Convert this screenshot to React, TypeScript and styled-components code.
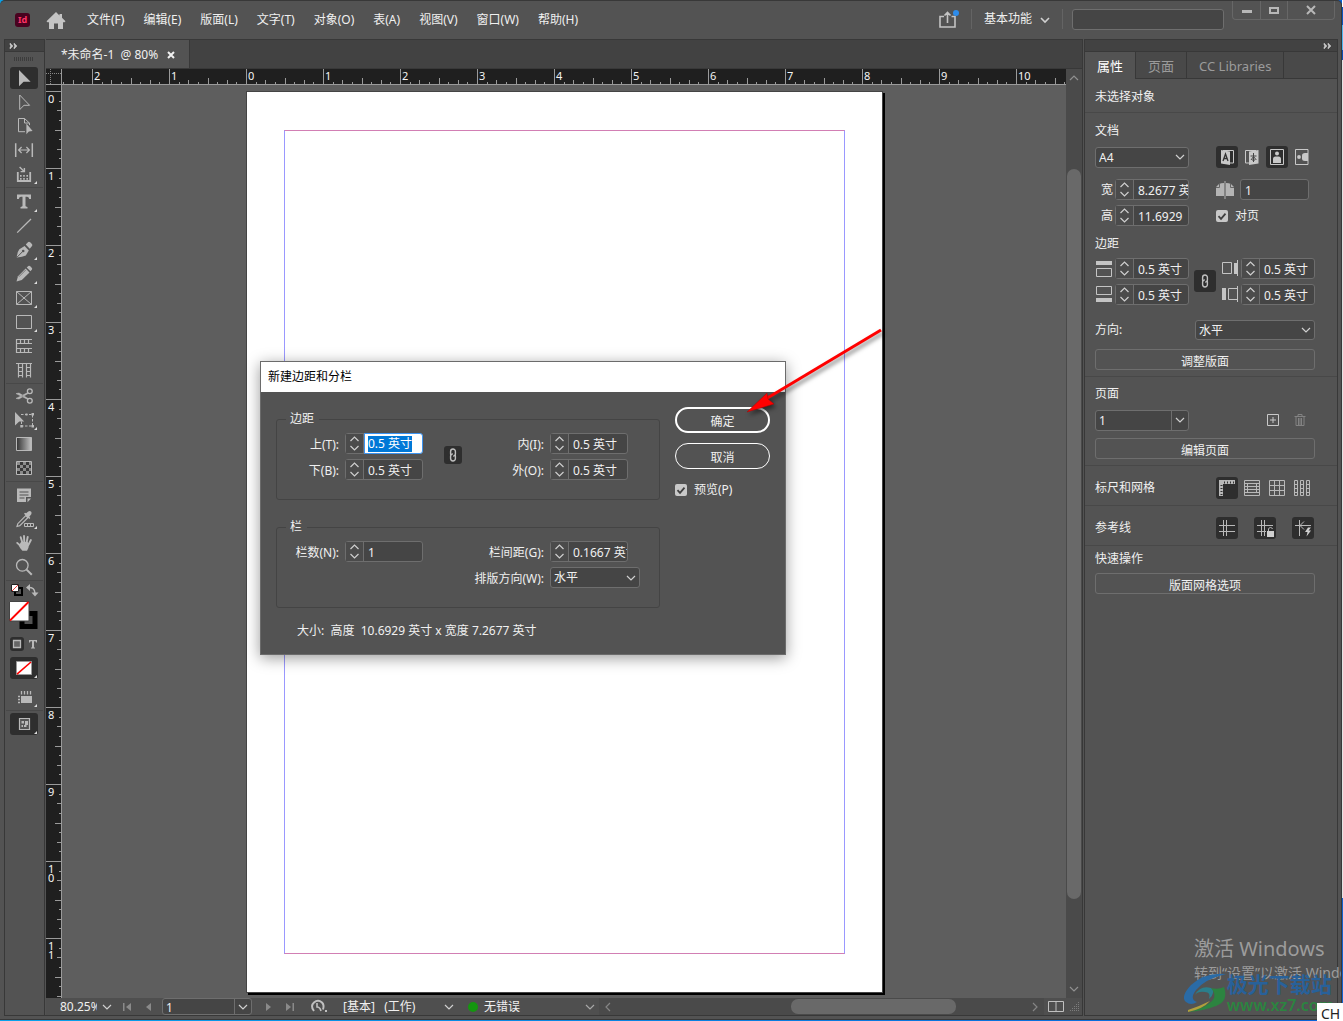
import React, { useEffect, useRef } from "react";
import styled, { createGlobalStyle, css } from "styled-components";

const c = {
  panel: "#535353",
  dark: "#424242",
  edge: "#383838",
  field: "#454545",
  line: "#6e6e6e",
  rule: "#484848",
  pressed: "#2e2e2e",
  icon: "#b9b9b9",
  text: "#f0f0f0",
};

const GlobalStyle = createGlobalStyle`
  * { box-sizing: border-box; }
  body { margin: 0; background: #535353; overflow: hidden; }
  body, button, input, select, fieldset {
    font-family: "Noto Sans", "Noto Sans CJK SC", sans-serif;
    font-size: 12px;
    line-height: 18px;
    color: ${c.text};
  }
  button, input, select { margin: 0; padding: 0; border: 0; background: none; outline: none; }
  svg { display: block; flex: none; overflow: visible; }
`;

/* ---------- window frame ---------- */

const Desktop = styled.div`
  height: 100vh;
  padding: 0 1px 1px 0;
  background:
    linear-gradient(#fff 0 7px, #0b55bf 7px 25px, #52b8f2 25px 50px, #0b4fb5 50px 60px, #e4e4e4 60px 88%, #1262cf 88%) right / 1px 100% no-repeat,
    linear-gradient(90deg, #0aa2ea, #0a62d8);
`;

const Window = styled.div`
  position: relative;
  display: flex;
  flex-direction: column;
  height: 100%;
  background: ${c.panel};
  border: solid ${c.edge};
  border-width: 1px 1px 1px 0;
  border-radius: 5px 5px 0 0;
`;

const TitleBar = styled.header`
  display: flex;
  align-items: flex-start;
  height: 38px;
  flex: none;
  padding: 0 6px 0 15px;
`;

const Brand = styled.div`
  display: flex;
  align-items: center;
  gap: 16px;
  width: 72px;
  height: 38px;
`;

const Logo = styled.span`
  width: 15px;
  height: 14px;
  border-radius: 3px;
  background: #49021f;
  color: #ff3366;
  font-size: 9px;
  font-weight: 700;
  line-height: 14px;
  text-align: center;
`;

const PlainButton = styled.button`
  display: flex;
  align-items: center;
  justify-content: center;
  gap: 8px;
  white-space: nowrap;
`;

const MenuBar = styled.nav`
  display: flex;
  align-items: center;
  gap: 19px;
  height: 38px;
  flex: 1;
`;

const TitleTools = styled.div`
  display: flex;
  align-items: center;
  height: 36px;
  gap: 12px;
`;

const SearchSlot = styled.div`
  display: flex;
  align-items: center;
  height: 37px;
  padding-left: 9px;
`;

const Separator = styled.span`
  width: 1px;
  height: 20px;
  background: #646464;
`;

const Search = styled.input`
  width: 152px;
  height: 21px;
  border: 1px solid ${c.line};
  border-radius: 3px;
  background: ${c.field};
`;

const WindowButtons = styled.div`
  display: flex;
  height: 19px;
  margin-left: 8px;
  border: 1px solid #676767;
  border-top: 0;
  border-radius: 0 0 4px 4px;
`;

const WindowButton = styled(PlainButton)<{ $wide?: boolean }>`
  width: ${(p) => (p.$wide ? 47 : 27)}px;
  & + & { border-left: 1px solid #676767; }
`;

const Body = styled.div`
  display: flex;
  flex: 1;
  min-height: 0;
  padding: 0 3px 3px 4px;
`;

const DockHead = styled.div<{ $right?: boolean }>`
  display: flex;
  align-items: center;
  justify-content: ${(p) => (p.$right ? "flex-end" : "flex-start")};
  height: 13px;
  flex: none;
  padding: 0 5px;
  background: ${c.dark};
  border: solid ${c.edge};
  border-width: 1px 0;
`;

/* ---------- tools ---------- */

const ToolDock = styled.aside`
  display: flex;
  flex-direction: column;
  width: 41px;
  flex: none;
  border: 1px solid ${c.edge};
  border-top: 0;
`;

const Grip = styled.div`
  width: 20px;
  height: 4px;
  flex: none;
  margin: 5px 0 5px 9px;
  background: repeating-linear-gradient(90deg, #3c3c3c 0 1px, transparent 1px 2px);
`;

const Tool = styled.button<{ $on?: boolean; $gap?: number }>`
  display: flex;
  align-items: center;
  justify-content: center;
  width: 28px;
  height: 22px;
  flex: none;
  margin: ${(p) => 1 + (p.$gap ?? 0)}px 5px 1px;
  border-radius: 3px;
  background: ${(p) => (p.$on ? c.pressed : "none")};
`;

const ToolRule = styled.hr`
  width: 37px;
  height: 1px;
  flex: none;
  margin: 1px 1px 0;
  border: 0;
  background: ${c.rule};
`;

const SwatchRow = styled.div<{ $top: number }>`
  display: flex;
  justify-content: space-between;
  align-items: center;
  height: 14px;
  flex: none;
  margin: ${(p) => p.$top}px 5px 0;
`;

const SmallTool = styled(PlainButton)<{ $on?: boolean }>`
  width: 14px;
  height: 14px;
  border-radius: 3px;
  background: ${(p) => (p.$on ? c.pressed : "none")};
`;

/* ---------- document ---------- */

const Document = styled.main`
  display: flex;
  flex-direction: column;
  flex: 1;
  min-width: 0;
  border-right: 1px solid ${c.edge};
  border-bottom: 1px solid ${c.edge};
`;

const TabStrip = styled.div`
  display: flex;
  height: 30px;
  flex: none;
  margin-left: 1px;
  background: ${c.dark};
  border: solid ${c.edge};
  border-width: 1px 0;
`;

const DocTab = styled.div`
  display: flex;
  align-items: center;
  gap: 10px;
  padding: 2px 15px 0;
  background: ${c.panel};
  border-right: 1px solid ${c.edge};
  white-space: pre;
`;

const Workspace = styled.div`
  display: grid;
  grid-template: 16px 1fr / 16px 1fr 16px;
  flex: 1;
  min-height: 0;
  background: #5e5e5e;
  margin-left: 1px;
`;

const RulerCell = styled.div<{ $side?: boolean }>`
  overflow: hidden;
  background: #1f1f1f;
  border: solid #9a9a9a;
  border-width: ${(p) => (p.$side ? "0 1px 0 0" : "0 0 1px 0")};
  svg { width: 100%; height: 100%; overflow: hidden; }
`;

const Corner = styled.div`
  background: #1f1f1f;
  border-right: 1px solid #9a9a9a;
  border-bottom: 1px solid #9a9a9a;
`;

const RulerText = styled.text`
  fill: #f4f4f4;
  font-size: 11px;
`;

const ScrollV = styled.div`
  display: flex;
  flex-direction: column;
  align-items: center;
  justify-content: space-between;
  grid-column: 3;
  grid-row: 1 / 3;
  padding: 4px 1px;
  background: #4a4a4a;
`;

const TrackV = styled.div`
  flex: 1;
  width: 100%;
  padding: 86px 0 85px;
`;

const Thumb = styled.div`
  height: 100%;
  border-radius: 7px;
  background: #696969;
`;

const Canvas = styled.div`
  overflow: hidden;
  padding: 6px 0 0 184px;
`;

const Page = styled.div`
  width: 637px;
  height: 902px;
  padding: 38px 37px;
  background: #fff;
  border: 1px solid #444;
  box-shadow: 2px 2px 0 #000;
`;

const MarginBox = styled.div`
  height: 824px;
  border: 1px solid #9a98ff;
  border-top-color: #d27fb4;
  border-bottom-color: #d27fb4;
`;

const StatusBar = styled.footer`
  display: flex;
  align-items: center;
  height: 17px;
  flex: none;
  margin-left: 1px;
  padding-left: 14px;
  background: #4f4f4f;
`;

const ZoomField = styled.input`
  width: 37px;
  height: 17px;
  margin-right: 5px;
`;

const StatusButton = styled(PlainButton)<{ $w: number }>`
  width: ${(p) => p.$w}px;
  height: 17px;
  flex: none;
`;

const StatusSelect = styled(PlainButton)<{ $w: number }>`
  justify-content: space-between;
  width: ${(p) => p.$w}px;
  white-space: pre;
`;

const StatusLabel = styled.span`
  display: flex;
  align-items: center;
  gap: 6px;
`;

const Dot = styled.i`
  width: 10px;
  height: 10px;
  border-radius: 50%;
  background: #14960f;
`;

const ScrollH = styled.div`
  display: flex;
  align-items: center;
  flex: 1;
  height: 17px;
  margin-left: 4px;
  padding: 0 4px;
  gap: 8px;
  background: #4a4a4a;
`;

const TrackH = styled.div`
  flex: 1;
  height: 15px;
  padding: 0 15% 0 39%;
`;

const StatusEnd = styled.div`
  display: flex;
  align-items: center;
  gap: 6px;
  padding: 0 2px 0 4px;
`;

/* ---------- form controls ---------- */

const fieldFrame = css`
  border: 1px solid ${c.line};
  border-radius: 3px;
  background: ${c.field};
`;

const StepBox = styled.div<{ $w: number }>`
  display: flex;
  width: ${(p) => p.$w}px;
  height: 21px;
  ${fieldFrame}
`;

const Spin = styled.div`
  display: flex;
  flex-direction: column;
  justify-content: space-evenly;
  align-items: center;
  width: 18px;
  flex: none;
  border-right: 1px solid ${c.line};
  background: #4b4b4b;
`;

const StepInput = styled.input<{ $active?: boolean }>`
  flex: 1;
  min-width: 0;
  padding: 2px 0 0 4px;
  ${(p) =>
    p.$active &&
    css`
      margin: -1px -1px -1px 0;
      border: 1px solid #3d94f0;
      border-radius: 0 3px 3px 0;
      background: #fff;
      color: #000;
      padding: 1px 0 0 3px;
      line-height: 16px;
    `}
  &::selection { background: #0078d7; color: #fff; }
`;

const TextField = styled.input<{ $w: number }>`
  width: ${(p) => p.$w}px;
  height: 21px;
  padding: 1px 0 0 4px;
  ${fieldFrame}
`;

const SelectBox = styled.div<{ $w: number; $h?: number; $split?: boolean }>`
  display: grid;
  grid-template: 1fr / 1fr 17px;
  align-items: center;
  width: ${(p) => p.$w}px;
  height: ${(p) => p.$h ?? 21}px;
  flex: none;
  ${fieldFrame}
  select, input {
    grid-area: 1 / 1 / 2 / ${(p) => (p.$split ? 2 : 3)};
    appearance: none;
    min-width: 0;
    height: 100%;
    min-height: 0;
    padding: 1px 0 0 3px;
  }
  svg { grid-area: 1 / 2; justify-self: center; pointer-events: none; }
`;

const DropButton = styled(PlainButton)`
  grid-area: 1 / 2;
  height: 100%;
  border-left: 1px solid ${c.line};
`;

const Check = styled.label`
  display: flex;
  align-items: center;
  gap: 7px;
  height: 21px;
  input {
    appearance: none;
    width: 12px;
    height: 12px;
    border-radius: 2px;
    background: #c8c8c8 url("data:image/svg+xml,%3Csvg xmlns='http://www.w3.org/2000/svg' viewBox='0 0 12 12'%3E%3Cpath d='M2.5 6.2l2.5 2.6L9.5 3.6' fill='none' stroke='%23404040' stroke-width='1.8'/%3E%3C/svg%3E");
  }
`;

const WideButton = styled.button`
  height: 21px;
  padding-top: 3px;
  border: 1px solid ${c.line};
  border-radius: 3px;
`;

const IconButton = styled(PlainButton)<{ $on?: boolean; $small?: boolean }>`
  width: ${(p) => (p.$small ? 18 : 22)}px;
  height: ${(p) => (p.$small ? 18 : 22)}px;
  border-radius: 3px;
  background: ${(p) => (p.$on ? c.pressed : "none")};
`;

/* ---------- properties panel ---------- */

const Properties = styled.aside`
  display: flex;
  flex-direction: column;
  width: 254px;
  flex: none;
  margin-left: 1px;
  border: solid ${c.edge};
  border-width: 0 1px 1px 1px;
`;

const PanelTabs = styled.div`
  display: flex;
  height: 27px;
  flex: none;
  background: #494949;
  border-bottom: 1px solid ${c.edge};
`;

const PanelTab = styled.button<{ $on?: boolean }>`
  padding: 0 12px;
  height: 27px;
  font-size: 13px;
  color: ${(p) => (p.$on ? "#fff" : "#9b9b9b")};
  background: ${(p) => (p.$on ? c.panel : "none")};
  border-right: 1px solid ${c.edge};
`;

const Section = styled.section<{ $top: number; $last?: boolean }>`
  display: flex;
  flex-direction: column;
  padding: ${(p) => p.$top}px 22px 6px 10px;
  border-bottom: ${(p) => (p.$last ? 0 : 1)}px solid ${c.rule};
`;

const Row = styled.div<{ $top?: number; $cols?: string; $h?: number }>`
  display: grid;
  grid-template-columns: ${(p) => p.$cols ?? "121px 1fr"};
  align-items: center;
  height: ${(p) => p.$h ?? 21}px;
  margin-top: ${(p) => p.$top ?? 0}px;
`;

const Group = styled.div<{ $gap?: number; $left?: number }>`
  display: flex;
  align-items: center;
  gap: ${(p) => p.$gap ?? 0}px;
  padding-left: ${(p) => p.$left ?? 0}px;
`;

const Stack = styled.div<{ $top: number }>`
  display: grid;
  margin-top: ${(p) => p.$top}px;
`;

const MarginGrid = styled.div`
  display: grid;
  grid-template-columns: 20px 74px 33px 19px 74px;
  row-gap: 5px;
  align-items: center;
  margin-top: 5px;
`;

const LinkCell = styled.div`
  grid-area: 1 / 3 / 3 / 4;
  display: flex;
  padding: 0 0 2px 5px;
`;

const Caption = styled.label`
  padding-left: 6px;
`;

/* ---------- dialog ---------- */

const Dialog = styled.div`
  position: absolute;
  left: 260px;
  top: 360px;
  width: 526px;
  border: 1px solid #6b6b6b;
  background: ${c.panel};
  box-shadow: 0 3px 14px rgba(0, 0, 0, 0.4);
`;

const DialogTitle = styled.h2`
  margin: 0;
  padding: 6px 7px;
  background: #fff;
  color: #000;
  font-size: 12px;
  font-weight: 400;
  line-height: 18px;
`;

const DialogBody = styled.div`
  display: flex;
  gap: 15px;
  padding: 15px 15px 14px;
`;

const Fields = styled.div`
  display: flex;
  flex-direction: column;
  gap: 18px;
  width: 384px;
  padding-top: 3px;
`;

const FieldSet = styled.fieldset`
  display: flex;
  align-items: flex-start;
  min-width: 0;
  margin: 0;
  padding: 5px 19px 19px 0;
  border: 1px solid #444;
  border-radius: 3px;
`;

const Legend = styled.legend`
  margin-left: 9px;
  padding: 0 5px 0 4px;
`;

const Pairs = styled.div<{ $right?: boolean }>`
  display: grid;
  grid-template-columns: ${(p) => (p.$right ? "max-content 90px" : "62px 78px")};
  gap: 5px 6px;
  margin-left: ${(p) => (p.$right ? "auto" : 0)};
  label { height: 21px; padding-top: 3px; text-align: right; white-space: nowrap; }
`;

const ChainCell = styled.div`
  align-self: center;
  padding: 0 0 4px 21px;
`;

const SizeNote = styled.p`
  margin: -4px 0 0 21px;
  white-space: pre;
`;

const Actions = styled.div`
  display: flex;
  flex-direction: column;
  gap: 10px;
  width: 95px;
`;

const Pill = styled.button<{ $main?: boolean }>`
  height: 26px;
  padding-top: 3px;
  border: ${(p) => (p.$main ? 2 : 1)}px solid #fff;
  border-radius: 13px;
`;

/* ---------- overlays ---------- */

const Arrow = styled.svg`
  position: absolute;
  left: 740px;
  top: 319px;
  filter: drop-shadow(2px 3px 2px rgba(0, 0, 0, 0.5));
`;

const Activation = styled.div`
  position: absolute;
  left: 1194px;
  right: 0;
  bottom: 36px;
  overflow: hidden;
  white-space: nowrap;
  color: #9c9c9c;
  font-size: 14px;
  line-height: 20px;
  strong { display: block; font-size: 20px; font-weight: 400; line-height: 28px; }
`;

const SiteMark = styled.div`
  position: absolute;
  right: 7px;
  bottom: 5px;
  display: flex;
  align-items: center;
  color: #28619a;
  font-size: 21px;
  font-weight: 700;
  line-height: 24px;
  small { display: block; color: #2c8440; font-size: 16px; font-weight: 600; line-height: 18px; }
`;

const Ime = styled.div`
  position: absolute;
  right: -2px;
  bottom: -2px;
  width: 26px;
  height: 18px;
  padding-left: 4px;
  background: #fff;
  color: #222;
  font-size: 14px;
  line-height: 22px;
  overflow: hidden;
`;

/* ---------- icons ---------- */

const Svg = ({ w = 24, h = w, children, fill = false, color = c.icon, sw = 1 }: any) => (
  <svg
    width={w}
    height={h}
    viewBox={`0 0 ${w} ${h}`}
    fill={fill ? color : "none"}
    stroke={fill ? "none" : color}
    strokeWidth={sw}
    aria-hidden="true"
  >
    {children}
  </svg>
);

const Chevron = ({ dir = "down", color = "#d0d0d0" }: { dir?: string; color?: string }) => {
  const d: Record<string, string> = {
    down: "M1 3l4 4 4-4",
    up: "M1 7l4-4 4 4",
    left: "M7 1L3 5l4 4",
    right: "M3 1l4 4-4 4",
  };
  return <Svg w={10} color={color} sw={1.2}><path d={d[dir]} /></Svg>;
};

const DoubleArrow = () => (
  <Svg w={8} h={6} color="#c8c8c8" fill><path d="M0 0l3 3-3 3V4l1-1-1-1zM4 0l3 3-3 3V4l1-1-1-1z" stroke="#c8c8c8" strokeWidth=".5" /></Svg>
);

const Chain = () => (
  <Svg w={8} h={14} color="#c0c0c0" sw={1.4}>
    <path d="M2.2 7.6A2.2 2.2 0 0 1 1.6 6V3.4a2.4 2.4 0 0 1 4.8 0V6a2 2 0 0 1-2.2 2" />
    <path d="M5.8 6.4A2.2 2.2 0 0 1 6.4 8v2.6a2.4 2.4 0 0 1-4.8 0V8a2 2 0 0 1 2.2-2" />
  </Svg>
);

const More = <path d="M25 19v3h-3z" fill="#dcdcdc" stroke="none" />;

const toolIcons: Record<string, React.ReactNode> = {
  select: <path d="M7 4v16.3l4.6-4.5h7z" fill={c.icon} stroke="none" />,
  direct: <path d="M7.7 5v14.6l4.3-4.3h5.6z" />,
  page: <><path d="M13 17.7H6.5V4.5h6l5 4.6v2M12.5 4.5V9h5" /><path d="M14.4 9.6v10.6l2.4-2.6 3.8-.5z" fill={c.icon} stroke="none" /></>,
  gap: <><path d="M3.7 5.3v13.6M20.3 5.3v13.6" strokeWidth="1.5" /><path d="M7 12h10M9.6 9L6.6 12l3 3M14.4 9l3 3-3 3" strokeWidth="1.2" /></>,
  collect: <>
    <path d="M5.8 10v9h12.4v-9" strokeWidth="1.8" />
    <path d="M8 13h1.6v1.8H8zM11.2 13h1.6v1.8h-1.6zM14.4 13H16v1.8h-1.6zM8 16h1.6v1.8H8zM11.2 16h1.6v1.8h-1.6zM14.4 16H16v1.8h-1.6z" fill={c.icon} stroke="none" />
    <path d="M7.6 5l4.6 4.4M12.4 6v3.6H8.6" strokeWidth="1.4" />{More}
  </>,
  type: <><path d="M5 4.500h14v4.500h-1.800q-.4-2.200-2.200-2.200h-1.500V16q0 .8 2 .9V18.500h-7v-1.600q2-.1 2-.9V6.800H9q-1.800 0-2.200 2.200H5z" fill={c.icon} stroke="none" />{More}</>,
  line: <path d="M5.2 18.6L19 5" strokeWidth="1.3" />,
  pen: <>
    <path d="M4.800 19.400Q5 14 7.400 11.200L12.600 8l4.200 4.400-3 5Q10.500 19 4.800 19.400Z" fill={c.icon} stroke="none" />
    <path d="M5 19.200l5.600-5.600" stroke={c.panel} /><circle cx="11.2" cy="13" r="1.3" fill={c.panel} stroke="none" />
    <path d="M13.800 6.600l2.400-2.500q1-.8 2 .2l1.700 1.800q.9 1 .1 2l-2.200 2.600z" fill={c.icon} stroke="none" />{More}
  </>,
  pencil: <><path d="M4.500 19.500L6 14.200l7.700-7.600 3.800 3.800L9.800 18z" fill={c.icon} stroke="none" /><path d="M14.700 5.600l1.700-1.700q.8-.6 1.600.2l1.900 1.900q.6.800 0 1.600l-1.500 1.700z" fill={c.icon} stroke="none" /><path d="M6.900 14.800l7-7" stroke={c.panel} strokeWidth=".6" />{More}</>,
  frame: <><path d="M4.500 5.500h15v13h-15zM4.500 5.500l15 13M19.500 5.500l-15 13" />{More}</>,
  rect: <><path d="M4.500 5.500h15v13h-15z" />{More}</>,
  hgrid: <path d="M20 5.500H4.500v13H20M4.500 9.500H20M4.500 14.500H20M8.500 5.500v4M12.500 5.500v4M16.500 5.500v4M8.500 14.500v4M12.500 14.500v4M16.500 14.500v4" strokeWidth="1.200" />,
  vgrid: <path d="M4 5.500h16M6.500 5.500v14M10.500 5.500v14M14.500 5.500v14M18.500 5.500v14M6.500 9.500h4M6.500 13.500h4M6.500 17.500h4M14.500 9.500h4M14.500 13.500h4M14.500 17.500h4" strokeWidth="1.200" />,
  scissors: <><circle cx="17.800" cy="7.200" r="2.400" strokeWidth="1.300" /><circle cx="17.800" cy="16.800" r="2.400" strokeWidth="1.300" /><path d="M15.800 8.600L4 14.400l3 .600 9-5.400zM15.800 15.400L4 9.600l3-.6 9 5.400z" fill={c.icon} strokeWidth=".5" /></>,
  transform: <>
    <path d="M9 6.500h11.500v11.500H9.500V13" strokeDasharray="2.500 1.500" /><path d="M19.500 5h2.500v2.500h-2.500zM19.500 17h2.500v2.500h-2.500zM8.300 17h2.500v2.500H8.300zM13.500 5.500h2v2h-2z" fill={c.icon} stroke="none" />
    <path d="M3 4v13.500l4.200-4h5z" fill={c.icon} stroke="none" />{More}
  </>,
  gradient: <><defs><linearGradient id="toolGradient"><stop offset="0" stopColor="#333" /><stop offset="1" stopColor="#c4c4c4" /></linearGradient></defs><path d="M4.500 5.500h15v13h-15z" fill="url(#toolGradient)" /></>,
  feather: <><path d="M4.500 5.500h15v13h-15z" fill="#3a3a3a" /><path d="M5 6h3v3H5zM11 6h3v3h-3zM17 6h2v3h-2zM8 9h3v3H8zM14 9h3v3h-3zM5 12h3v3H5zM11 12h3v3h-3zM17 12h2v3h-2zM8 15h3v3H8zM14 15h3v3h-3z" fill="#8c8c8c" stroke="none" /></>,
  note: <><path d="M5 5.500h14v8.500h-5v5H5z" fill={c.icon} stroke="none" /><path d="M15.500 19.200v-3.700H19z" fill={c.icon} stroke="none" /><path d="M7.500 9h9M7.500 12h9M7.500 15h5" stroke={c.panel} strokeWidth="1.200" /></>,
  dropper: <><path d="M5 19.500l.8-2.800 8-8 2 2-8 8z" strokeWidth="1.200" /><path d="M12 6.800l5.300 5.300 1-1-1-1.400 2-2.500q.8-1.400-.3-2.600t-2.700-.2l-2.200 1.900L13 5.800z" fill={c.icon} stroke="none" /><path d="M12.500 16.500h9v3h-9zM15.500 16.500v3M18.500 16.500v3" />{More}</>,
  hand: <>
    <path d="M8.700 6.200l1.900 6M12 4.900l.3 7M15.700 6l-1.200 6M18.900 9l-2.600 5M5.200 11.900l3.800 3.300" strokeWidth="1.900" strokeLinecap="round" />
    <path d="M9 11h6.500l1.700 2q-.4 4-2.200 6.800h-4.600Q8 17.500 6.800 14.400z" fill={c.icon} stroke="none" />
  </>,
  zoom: <><circle cx="10.300" cy="10.300" r="5.800" strokeWidth="1.300" /><path d="M14.600 14.600l5.200 5.200" strokeWidth="2" /></>,
  none: <><path d="M4.500 5.500h15v13h-15z" fill="#fff" stroke="#9a9a9a" /><path d="M5 18.200L19 6" stroke="#f00" strokeWidth="1.600" />{More}</>,
  view: <><path d="M9 11h11v7H9z" fill={c.icon} stroke="none" /><path d="M9.500 6v3.500M12.500 6v3.500M15.500 6v3.500M18.500 6v3.500M6 11.500h2M6 14.500h2M6 17.500h2" strokeWidth="1.300" />{More}</>,
  screen: <><path d="M7.500 6.500h10v11h-10z" fill="#555" strokeWidth="1.200" /><path d="M9.500 9h2.500v2.500H9.500zM13 9h3v4h-1.500v2H12v-2h1zM9.500 13h1.500v2H9.500z" fill={c.icon} stroke="none" />{More}</>,
};

const ToolItem = ({ id, label, on, gap }: { id: string; label: string; on?: boolean; gap?: number }) => (
  <Tool $on={on} $gap={gap} aria-label={label}><Svg>{toolIcons[id]}</Svg></Tool>
);

/* ---------- composite parts ---------- */

const INCH = 77;

function Ruler({ vertical, origin, from, to }: { vertical?: boolean; origin: number; from: number; to: number }) {
  const ticks: React.ReactNode[] = [];
  for (let i = from * 8 - 7; i <= to * 8 + 7; i++) {
    const p = Math.round(origin + (i * INCH) / 8) + 0.5;
    const len = i % 8 === 0 ? 16 : i % 4 === 0 ? 6 : i % 2 === 0 ? 4 : 2;
    ticks.push(vertical ? <path key={i} d={`M${15 - len} ${p}H15`} /> : <path key={i} d={`M${p} ${15 - len}V15`} />);
  }
  const labels: React.ReactNode[] = [];
  for (let n = from; n <= to; n++) {
    const p = Math.round(origin + n * INCH);
    const name = String(Math.abs(n));
    if (!vertical) labels.push(<RulerText key={n} x={p + 2} y={11}>{name}</RulerText>);
    else name.split("").forEach((ch, k) => labels.push(<RulerText key={`${n}-${k}`} x={2} y={p + 12 + k * 9}>{ch}</RulerText>));
  }
  return <svg aria-hidden="true"><g stroke="#9a9a9a">{ticks}</g>{labels}</svg>;
}

function Stepper({ id, label, value, w = 78, active }: { id: string; label?: string; value: string; w?: number; active?: boolean }) {
  const ref = useRef<HTMLInputElement>(null);
  useEffect(() => {
    if (active && ref.current) {
      ref.current.focus();
      ref.current.select();
    }
  }, [active]);
  return (
    <StepBox $w={w}>
      <Spin>
        <PlainButton aria-label="增加" tabIndex={-1}><Svg w={9} h={6} color="#cfcfcf" sw={1.2}><path d="M.5 5l4-4 4 4" /></Svg></PlainButton>
        <PlainButton aria-label="减少" tabIndex={-1}><Svg w={9} h={6} color="#cfcfcf" sw={1.2}><path d="M.5 1l4 4 4-4" /></Svg></PlainButton>
      </Spin>
      <StepInput ref={ref} id={id} aria-label={label} defaultValue={value} $active={active} />
    </StepBox>
  );
}

const Select = ({ id, label, value, w, h }: { id?: string; label?: string; value: string; w: number; h?: number }) => (
  <SelectBox $w={w} $h={h}>
    <select id={id} aria-label={label}><option>{value}</option></select>
    <Chevron />
  </SelectBox>
);

const Combo = ({ w, h, label }: { w: number; h?: number; label: string }) => (
  <SelectBox $w={w} $h={h} $split>
    <input defaultValue="1" aria-label={label} />
    <DropButton aria-label="展开"><Chevron /></DropButton>
  </SelectBox>
);

const MarginIcon = ({ side }: { side: "top" | "bottom" | "inner" | "outer" }) => (
  <Svg w={17} h={17} color="#c4c4c4">
    {side === "top" && <><path d="M1 1h16v4H1z" fill="#c4c4c4" stroke="none" /><path d="M1.500 8.500h15v8h-15z" /></>}
    {side === "bottom" && <><path d="M1 12h16v4H1z" fill="#c4c4c4" stroke="none" /><path d="M1.500 .5h15v8h-15z" /></>}
    {side === "inner" && <><path d="M12 3h4v11h-4z" fill="#c4c4c4" stroke="none" /><path d="M.5 2.500h9v11h-9zM15.500 0v16" /></>}
    {side === "outer" && <><path d="M0 2h4v12H0z" fill="#c4c4c4" stroke="none" /><path d="M15 2.500H6.500v11H15M15.500 0v16" /></>}
  </Svg>
);

const menus = ["文件(F)", "编辑(E)", "版面(L)", "文字(T)", "对象(O)", "表(A)", "视图(V)", "窗口(W)", "帮助(H)"];

function MarginsDialog() {
  return (
    <Dialog role="dialog" aria-labelledby="dlg-title">
      <DialogTitle id="dlg-title">新建边距和分栏</DialogTitle>
      <DialogBody>
        <Fields>
          <FieldSet>
            <Legend>边距</Legend>
            <Pairs>
              <label htmlFor="m-top">上(T):</label>
              <Stepper id="m-top" value="0.5 英寸" active />
              <label htmlFor="m-bottom">下(B):</label>
              <Stepper id="m-bottom" value="0.5 英寸" />
            </Pairs>
            <ChainCell><IconButton $on $small aria-label="统一边距"><Chain /></IconButton></ChainCell>
            <Pairs $right>
              <label htmlFor="m-in">内(I):</label>
              <Stepper id="m-in" value="0.5 英寸" />
              <label htmlFor="m-out">外(O):</label>
              <Stepper id="m-out" value="0.5 英寸" />
            </Pairs>
          </FieldSet>
          <FieldSet>
            <Legend>栏</Legend>
            <Pairs>
              <label htmlFor="col-n">栏数(N):</label>
              <Stepper id="col-n" value="1" />
            </Pairs>
            <Pairs $right>
              <label htmlFor="col-g">栏间距(G):</label>
              <Stepper id="col-g" value="0.1667 英寸" />
              <label htmlFor="col-w">排版方向(W):</label>
              <Select id="col-w" value="水平" w={90} />
            </Pairs>
          </FieldSet>
          <SizeNote>大小:  高度  10.6929 英寸 x 宽度 7.2677 英寸</SizeNote>
        </Fields>
        <Actions>
          <Pill $main>确定</Pill>
          <Pill>取消</Pill>
          <Check><input type="checkbox" defaultChecked />预览(P)</Check>
        </Actions>
      </DialogBody>
    </Dialog>
  );
}

function PropertiesPanel() {
  return (
    <Properties>
      <DockHead $right><DoubleArrow /></DockHead>
      <PanelTabs>
        <PanelTab $on>属性</PanelTab><PanelTab>页面</PanelTab><PanelTab>CC Libraries</PanelTab>
      </PanelTabs>
      <Section $top={9}>未选择对象</Section>
      <Section $top={9}>
        <span>文档</span>
        <Row $top={6} $h={22}>
          <Select label="页面大小" value="A4" w={94} />
          <Group $gap={3}>
            <IconButton $on aria-label="从左到右"><Svg w={14} h={16} color="#c8c8c8"><path d="M3 1.500h10.500V14H3" /><path d="M1 1l9 1.500V16l-9-1.500z" fill="#c8c8c8" stroke="none" /><path d="M3 12l2.500-7L8 12M4 9.500h3.200" stroke="#333" strokeWidth="1.300" /></Svg></IconButton>
            <IconButton aria-label="从右到左"><Svg w={14} h={16} color="#c8c8c8"><path d="M11 1.500H.5V14H4" /><path d="M13.500 1L4 2.500V16l9.500-1.500z" fill="#c8c8c8" stroke="none" /><path d="M5.500 7h6M8.500 4v9M8.500 7.500L6 11M8.500 7.500l2.800 3.500M7 11h3" stroke="#444" /></Svg></IconButton>
            <IconButton $on aria-label="纵向"><Svg w={14} h={16} color="#c8c8c8"><path d="M.5 .5h13v15H.5z" /><circle cx="7" cy="4.500" r="2" fill="#c8c8c8" stroke="none" /><path d="M3 14v-4q0-2.500 2.500-2.500h3Q11 7.500 11 10v4z" fill="#c8c8c8" stroke="none" /></Svg></IconButton>
            <IconButton aria-label="横向"><Svg w={14} h={16} color="#c8c8c8"><path d="M.5 .5h12.500v15H.5z" /><circle cx="4" cy="8" r="1.900" fill="#c8c8c8" stroke="none" /><path d="M13 4h-3q-3 0-3 2.500v3Q7 12 10 12h3z" fill="#c8c8c8" stroke="none" /></Svg></IconButton>
          </Group>
        </Row>
        <Row $top={11} $cols="20px 101px 24px 1fr">
          <Caption htmlFor="p-w">宽</Caption>
          <Stepper id="p-w" value="8.2677 英寸" w={74} />
          <Svg w={18} h={18} fill color="#b4b4b4"><path d="M0 6l3-3q2-1 5-1v13H0zM10 2q3 0 5 1l3 3v9h-8zM8.500 0h1v18h-1z" /><path d="M0 6.500h3.500V3M18 6.500h-3.500V3" stroke="#666" fill="none" /></Svg>
          <TextField $w={69} defaultValue="1" aria-label="页数" />
        </Row>
        <Row $top={5} $cols="20px 101px 1fr">
          <Caption htmlFor="p-h">高</Caption>
          <Stepper id="p-h" value="11.6929" w={74} />
          <Check><input type="checkbox" defaultChecked />对页</Check>
        </Row>
        <Stack $top={9}>边距</Stack>
        <MarginGrid>
          <MarginIcon side="top" /><Stepper id="p-mt" label="上边距" value="0.5 英寸" w={74} />
          <LinkCell><IconButton $on aria-label="统一边距"><Chain /></IconButton></LinkCell>
          <MarginIcon side="inner" /><Stepper id="p-mi" label="内边距" value="0.5 英寸" w={74} />
          <MarginIcon side="bottom" /><Stepper id="p-mb" label="下边距" value="0.5 英寸" w={74} />
          <MarginIcon side="outer" /><Stepper id="p-mo" label="外边距" value="0.5 英寸" w={74} />
        </MarginGrid>
        <Row $top={15} $cols="100px 1fr" $h={20}>
          <label htmlFor="p-dir">方向:</label>
          <Select id="p-dir" value="水平" w={120} h={20} />
        </Row>
        <Stack $top={9}><WideButton>调整版面</WideButton></Stack>
      </Section>
      <Section $top={8}>
        <span>页面</span>
        <Row $top={6} $cols="167px 1fr">
          <Combo w={94} label="当前页面" />
          <Group $gap={5}>
            <IconButton aria-label="新建页面"><Svg w={12} color="#c8c8c8"><path d="M.5 .5h11v11H.5zM3 6h6M6 3v6" /></Svg></IconButton>
            <IconButton aria-label="删除页面"><Svg w={12} color="#838383"><path d="M.5 2.500h11M4 2V.5h4V2M2 3v8.500h8V3M4.500 4v7M6 4v7M7.500 4v7" /></Svg></IconButton>
          </Group>
        </Row>
        <Stack $top={8}><WideButton>编辑页面</WideButton></Stack>
      </Section>
      <Section $top={10}>
        <Row $h={23}>
          <span>标尺和网格</span>
          <Group $gap={3}>
            <IconButton $on aria-label="标尺"><Svg w={16}><path d="M0 0h16v4H4v12H0z" fill={c.icon} stroke="none" /><path d="M5 2.500h11M2.500 5v11" stroke="#333" strokeDasharray="1 2" strokeWidth="2" /></Svg></IconButton>
            <IconButton aria-label="基线网格"><Svg w={16}><path d="M.5 .5h15v15H.5zM.5 3.500h15M.5 6.500h15M.5 9.500h15M.5 12.500h15M3.500 3v10M12.500 3v10" /></Svg></IconButton>
            <IconButton aria-label="文档网格"><Svg w={16}><path d="M.5 .5h15v15H.5zM.5 5.500h15M.5 10.500h15M5.500 .5v15M10.500 .5v15" /></Svg></IconButton>
            <IconButton aria-label="版面网格"><Svg w={16}><path d="M.5 .5h3v15h-3zM6.500 .5h3v15h-3zM12.500 .5h3v15h-3zM.5 4.500h3M.5 8.500h3M.5 12.500h3M6.500 4.500h3M6.500 8.500h3M6.500 12.500h3M12.500 4.500h3M12.500 8.500h3M12.500 12.500h3" /></Svg></IconButton>
          </Group>
        </Row>
      </Section>
      <Section $top={10}>
        <Row $h={23}>
          <span>参考线</span>
          <Group $gap={16}>
            <IconButton $on aria-label="显示参考线"><Svg w={16}><path d="M0 5.500h16M0 11.500h16M4.500 0v16M7.500 0v16" /></Svg></IconButton>
            <IconButton $on aria-label="锁定参考线"><Svg w={16}><path d="M0 5.500h16M0 11.500h9M4.500 0v16M7.500 0v16" /><path d="M10 11h7v6h-7z" fill="#d0d0d0" stroke="none" /><path d="M11.500 11V9q.5-1.500 2-1.500t2 1.500" /></Svg></IconButton>
            <IconButton $on aria-label="智能参考线"><Svg w={16}><path d="M0 5.500h16M4.500 0v16M9 1.500l-4 4 4 4" /><path d="M13 7.500L10 12h2.500l-1 4.500 4.500-6h-2.500L16 7.500z" fill="#d0d0d0" stroke="none" /></Svg></IconButton>
          </Group>
        </Row>
      </Section>
      <Section $top={4} $last>
        <span>快速操作</span>
        <Stack $top={5}><WideButton>版面网格选项</WideButton></Stack>
      </Section>
    </Properties>
  );
}

export default function App() {
  return (
    <>
      <GlobalStyle />
      <Desktop>
        <Window>
          <TitleBar>
            <Brand>
              <Logo>Id</Logo>
              <PlainButton aria-label="主页"><Svg w={20} h={17} fill color="#c4c4c4"><path d="M10 0l3.500 3.400V2H16v3.800l3.500 3.400-1 1H17V17h-5v-5.500H8V17H3v-6.800H1.500l-1-1z" /></Svg></PlainButton>
            </Brand>
            <MenuBar>{menus.map((m) => <PlainButton key={m}>{m}</PlainButton>)}</MenuBar>
            <TitleTools>
              <PlainButton aria-label="共享"><Svg w={20} h={18} color="#c4c4c4" sw={1.6}><path d="M5 6.500H1v10.500h15V6.500h-3.500M8.500 13V3M5.500 5.500l3-3 3 3" /><circle cx="17" cy="3" r="3" fill="#2d8ceb" stroke="none" /></Svg></PlainButton>
              <Separator />
              <PlainButton>基本功能<Svg w={10} color="#d0d0d0" sw={1.6}><path d="M1 4l4 4 4-4" /></Svg></PlainButton>
              <Separator />
            </TitleTools>
            <SearchSlot><Search aria-label="搜索" /></SearchSlot>
            <WindowButtons>
              <WindowButton aria-label="最小化"><Svg w={10} h={3} fill color="#b8b8b8"><path d="M0 1h10v3H0z" /></Svg></WindowButton>
              <WindowButton aria-label="最大化"><Svg w={10} h={7} color="#b8b8b8" sw={2}><path d="M1 1h8v5H1z" /></Svg></WindowButton>
              <WindowButton $wide aria-label="关闭"><Svg w={10} h={8} color="#b8b8b8" sw={2}><path d="M1 0l8 8M9 0L1 8" /></Svg></WindowButton>
            </WindowButtons>
          </TitleBar>

          <Body>
            <ToolDock>
              <DockHead><DoubleArrow /></DockHead>
              <Grip />
              <ToolItem id="select" label="选择工具" on />
              <ToolItem id="direct" label="直接选择工具" />
              <ToolItem id="page" label="页面工具" />
              <ToolItem id="gap" label="间隙工具" />
              <ToolItem id="collect" label="内容收集器工具" />
              <ToolRule />
              <ToolItem id="type" label="文字工具" gap={2} />
              <ToolItem id="line" label="直线工具" />
              <ToolItem id="pen" label="钢笔工具" />
              <ToolItem id="pencil" label="铅笔工具" />
              <ToolItem id="frame" label="矩形框架工具" />
              <ToolItem id="rect" label="矩形工具" />
              <ToolItem id="hgrid" label="水平网格工具" />
              <ToolItem id="vgrid" label="垂直网格工具" />
              <ToolRule />
              <ToolItem id="scissors" label="剪刀工具" />
              <ToolItem id="transform" label="自由变换工具" />
              <ToolItem id="gradient" label="渐变色板工具" />
              <ToolItem id="feather" label="渐变羽化工具" />
              <ToolRule />
              <ToolItem id="note" label="附注工具" gap={1} />
              <ToolItem id="dropper" label="颜色主题工具" />
              <ToolItem id="hand" label="抓手工具" />
              <ToolItem id="zoom" label="缩放显示工具" />
              <ToolRule />
              <SwatchRow $top={2}>
                <SmallTool aria-label="默认填色和描边"><Svg w={12}><path d="M4 4h7v7H4z" stroke="#000" strokeWidth="2" /><path d="M.5 .5h7v7h-7z" fill="#fff" stroke="#222" /><path d="M1 7l6-6" stroke="#e44" /></Svg></SmallTool>
                <SmallTool aria-label="互换填色和描边"><Svg w={12}><path d="M2 3.500q7-.5 7 6" strokeWidth="1.600" /><path d="M4 0v7L0 3.500zM5.500 8.500h7L9 12.500z" fill={c.icon} stroke="none" /></Svg></SmallTool>
              </SwatchRow>
              <SwatchRow $top={10}>
                <Svg w={28} h={14}>
                  <path d="M12 6.500h13v13H12z" stroke="#000" strokeWidth="5" />
                  <path d="M-.5 -5.500h19.500v19.500H-.5z" fill="#fff" stroke="#444" />
                  <path d="M0 13.500L18.500 -5" stroke="#f00" strokeWidth="1.800" />
                </Svg>
              </SwatchRow>
              <SwatchRow $top={16}>
                <SmallTool $on aria-label="格式针对容器"><Svg w={8}><path d="M.5 .5h7v7h-7z" fill="#666" strokeWidth="1.300" /></Svg></SmallTool>
                <SmallTool aria-label="格式针对文本"><Svg w={10} h={10}><path d="M2 1h8v2.500H9L8.500 2.300H7V8.500h1V9.500H4V8.500h1V2.300H3.500L3 3.500H2z" fill={c.icon} stroke="none" /></Svg></SmallTool>
              </SwatchRow>
              <ToolItem id="none" label="应用无" on gap={5} />
              <ToolItem id="view" label="视图选项" gap={5} />
              <ToolRule />
              <ToolItem id="screen" label="屏幕模式" on gap={1} />
            </ToolDock>

            <Document>
              <TabStrip>
                <DocTab>*未命名-1  @ 80%
                  <PlainButton aria-label="关闭文档"><Svg w={6} color="#f0f0f0" sw={2}><path d="M0 0l6 6M6 0L0 6" /></Svg></PlainButton>
                </DocTab>
              </TabStrip>
              <Workspace>
                <Corner><Svg w={15} color="#888"><path d="M0 4.500h15M4.500 0v15" strokeDasharray="1 1" /></Svg></Corner>
                <RulerCell><Ruler origin={184} from={-2} to={10} /></RulerCell>
                <ScrollV>
                  <Chevron dir="up" color="#909090" />
                  <TrackV><Thumb /></TrackV>
                  <Chevron color="#909090" />
                </ScrollV>
                <RulerCell $side><Ruler vertical origin={6} from={0} to={11} /></RulerCell>
                <Canvas><Page><MarginBox /></Page></Canvas>
              </Workspace>
              <StatusBar>
                <ZoomField defaultValue="80.25%" aria-label="缩放级别" />
                <StatusButton $w={10} aria-label="缩放选项"><Chevron /></StatusButton>
                <StatusButton $w={30} aria-label="第一页"><Svg w={8} fill color="#8a8a8a"><path d="M0 0h1.500v8H0zM8 0v8L3 4z" /></Svg></StatusButton>
                <StatusButton $w={14} aria-label="上一页"><Svg w={8} fill color="#8a8a8a"><path d="M6 0v8L1 4z" /></Svg></StatusButton>
                <Group $left={6}><Combo w={90} h={17} label="页码" /></Group>
                <StatusButton $w={32} aria-label="下一页"><Svg w={8} fill color="#8a8a8a"><path d="M2 0v8l5-4z" /></Svg></StatusButton>
                <StatusButton $w={12} aria-label="最后一页"><Svg w={8} fill color="#8a8a8a"><path d="M6.500 0H8v8H6.500zM0 0v8l5-4z" /></Svg></StatusButton>
                <StatusButton $w={47} aria-label="打开页面"><Svg w={17} h={13} color="#c0c0c0" sw={2}><path d="M3 11Q-1 6 3 2.500t8 0q2.500 2.500 1 7" /><path d="M6 3v4q3 0 4 4" strokeWidth="1.600" /><path d="M14 10h2v2h-2z" fill="#c0c0c0" stroke="none" /></Svg></StatusButton>
                <StatusSelect $w={111}>[基本]   (工作)<Chevron /></StatusSelect>
                <Group $left={14}>
                  <StatusSelect $w={127}><StatusLabel><Dot />无错误</StatusLabel><Chevron color="#a8a8a8" /></StatusSelect>
                </Group>
                <ScrollH>
                  <Chevron dir="left" color="#858585" />
                  <TrackH><Thumb /></TrackH>
                  <Chevron dir="right" color="#858585" />
                </ScrollH>
                <StatusEnd>
                  <PlainButton aria-label="拆分版面"><Svg w={16} h={11} color="#c0c0c0"><path d="M.5 .5h15v10H.5zM8 .5v10" /></Svg></PlainButton>
                  <Svg w={10} fill color="#7c7c7c"><path d="M8 0h1v1H8zM6 2h1v1H6zM8 2h1v1H8zM4 4h1v1H4zM6 4h1v1H6zM8 4h1v1H8zM2 6h1v1H2zM4 6h1v1H4zM6 6h1v1H6zM8 6h1v1H8zM0 8h1v1H0zM2 8h1v1H2zM4 8h1v1H4zM6 8h1v1H6zM8 8h1v1H8z" /></Svg>
                </StatusEnd>
              </StatusBar>
            </Document>

            <PropertiesPanel />
          </Body>

          <MarginsDialog />
          <Arrow width="146" height="96" viewBox="0 0 146 96" aria-hidden="true">
            <path d="M141 10L24 80" stroke="#f00" strokeWidth="3" />
            <path d="M7 92L27 73l1 6 6 5z" fill="#f00" stroke="#a00" strokeWidth=".5" />
          </Arrow>
          <Activation><strong>激活 Windows</strong>转到“设置”以激活 Windows。</Activation>
          <SiteMark>
            <svg width="44" height="40" viewBox="0 0 44 40" aria-hidden="true">
              <path d="M43 1Q22-1 8 12-3 24 3 29 8 33 14 29 6 26 13 17 22 6 43 1Z" fill="#2a6ba6" />
              <path d="M41 14Q46 28 33 33 20 38 5 39 22 35 29 28 35 21 27 15 36 17 41 14Z" fill="#2c8440" />
              <path d="M12 22Q17 12 28 15 33 20 26 26 28 19 22 19 15 18 12 22Z" fill="#2a7f8c" />
              <path d="M5 37Q17 33 27 28 20 36 5 39Z" fill="#b0a03c" />
            </svg>
            <div>极光下载站<small>www.xz7.com</small></div>
          </SiteMark>
          <Ime>CH</Ime>
        </Window>
      </Desktop>
    </>
  );
}
